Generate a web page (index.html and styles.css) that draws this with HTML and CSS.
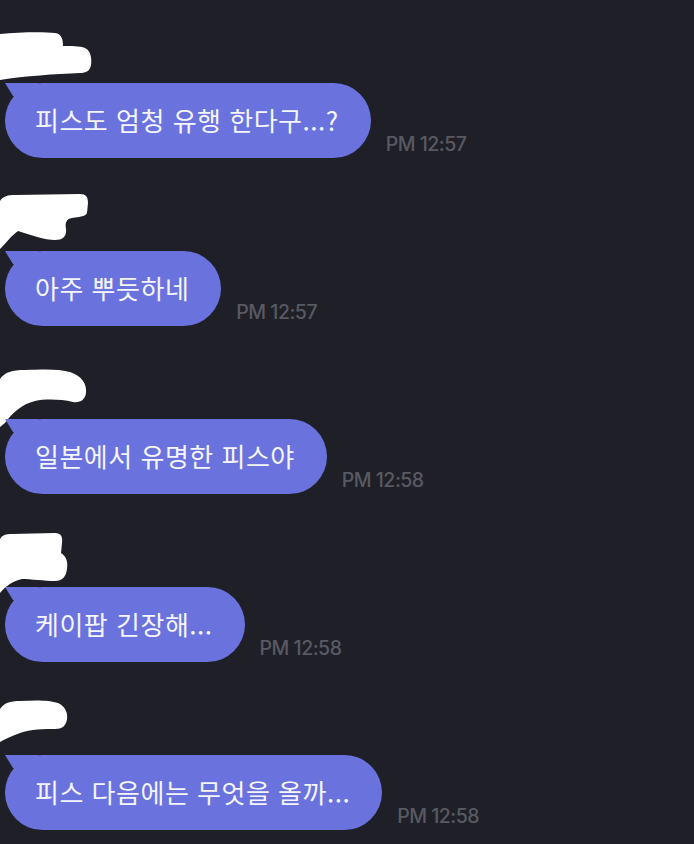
FILE: index.html
```html
<!DOCTYPE html>
<html lang="ko">
<head>
<meta charset="utf-8">
<link rel="stylesheet" href="styles.css">
</head>
<body>
<main class="chat">
  <section class="msg">
    <svg class="name" viewBox="0 0 110 68" width="110" height="68"><path d="M0,19 C20,17 45,17 55,18 C62,19 63,25 63,31 C70,31 80,31 85,33 C91,36 92,44 91,50 C90,56 86,58 80,58 C55,59 25,61 0,65 Z"/></svg>
    <div class="row">
      <div class="bubble">피스도 엄청 유행 한다구...?</div>
      <span class="time">PM 12:57</span>
    </div>
  </section>
  <section class="msg">
    <svg class="name" viewBox="0 0 110 68" width="110" height="68"><path d="M0,18 C3,13 8,12 15,12 L80,11 C86,11 88,14 88,20 L87,30 C86,33 80,34 72,35 C66,36 65,40 66,46 C67,54 62,57 55,57 C45,57 30,52 18,48 C12,52 6,60 0,66 Z"/></svg>
    <div class="row">
      <div class="bubble">아주 뿌듯하네</div>
      <span class="time">PM 12:57</span>
    </div>
  </section>
  <section class="msg">
    <svg class="name" viewBox="0 0 110 68" width="110" height="68"><path d="M0,28 C5,21 12,19 25,19 C45,18 60,18 70,21 C82,25 87,33 86,42 C85,49 80,52 73,51 C60,48 45,48 35,50 C22,53 12,62 5,72 L0,76 Z"/></svg>
    <div class="row">
      <div class="bubble">일본에서 유명한 피스야</div>
      <span class="time">PM 12:58</span>
    </div>
  </section>
  <section class="msg">
    <svg class="name" viewBox="0 0 110 68" width="110" height="68"><path d="M0,20 C2,16 6,15 12,15 L55,14 C61,14 63,18 62,24 L61,34 C66,37 68,42 67,50 C66,58 62,62 55,62 C45,62 30,60 22,60 C12,62 5,68 0,74 Z"/></svg>
    <div class="row">
      <div class="bubble">케이팝 긴장해...</div>
      <span class="time">PM 12:58</span>
    </div>
  </section>
  <section class="msg">
    <svg class="name" viewBox="0 0 110 68" width="110" height="68"><path d="M0,22 C4,16 10,14 20,14 C35,13 50,13 58,16 C65,19 68,26 67,32 C66,39 62,42 55,42 C45,42 30,42 20,46 C12,49 5,52 0,55 Z"/></svg>
    <div class="row">
      <div class="bubble">피스 다음에는 무엇을 올까...</div>
      <span class="time">PM 12:58</span>
    </div>
  </section>
</main>
</body>
</html>
```
FILE: styles.css
```css
html, body {
  margin: 0;
  padding: 0;
  background: #1f2027;
  height: 100%;
}
body {
  font-family: "Noto Sans CJK KR", "Noto Sans", sans-serif;
  overflow: hidden;
}
.chat {
  padding: 15px 0 0 0;
  display: flex;
  flex-direction: column;
  gap: 25px;
}
.msg {
  display: flex;
  flex-direction: column;
}
.name {
  display: block;
  overflow: visible;
  fill: #ffffff;
}
.row {
  display: flex;
  align-items: flex-end;
  gap: 15px;
  padding-left: 5px;
}
.bubble {
  position: relative;
  height: 75px;
  box-sizing: border-box;
  display: flex;
  align-items: center;
  padding: 0 32px 2px 30px;
  background: #6a73dd;
  border-radius: 37.5px;
  color: #f5f5fc;
  font-size: 26px;
  letter-spacing: 0.5px;
  line-height: 1;
  white-space: nowrap;
}
.bubble::before {
  content: "";
  position: absolute;
  left: 0;
  top: 0;
  width: 34px;
  height: 22px;
  background: #6a73dd;
  clip-path: polygon(0 0, 34px 0, 22px 22px, 8px 13px);
}
.time {
  font-family: Inter, "Liberation Sans", sans-serif;
  font-weight: 500;
  font-size: 19.5px;
  letter-spacing: -0.5px;
  color: #595963;
  margin-bottom: 3px;
  line-height: 22px;
}
```
